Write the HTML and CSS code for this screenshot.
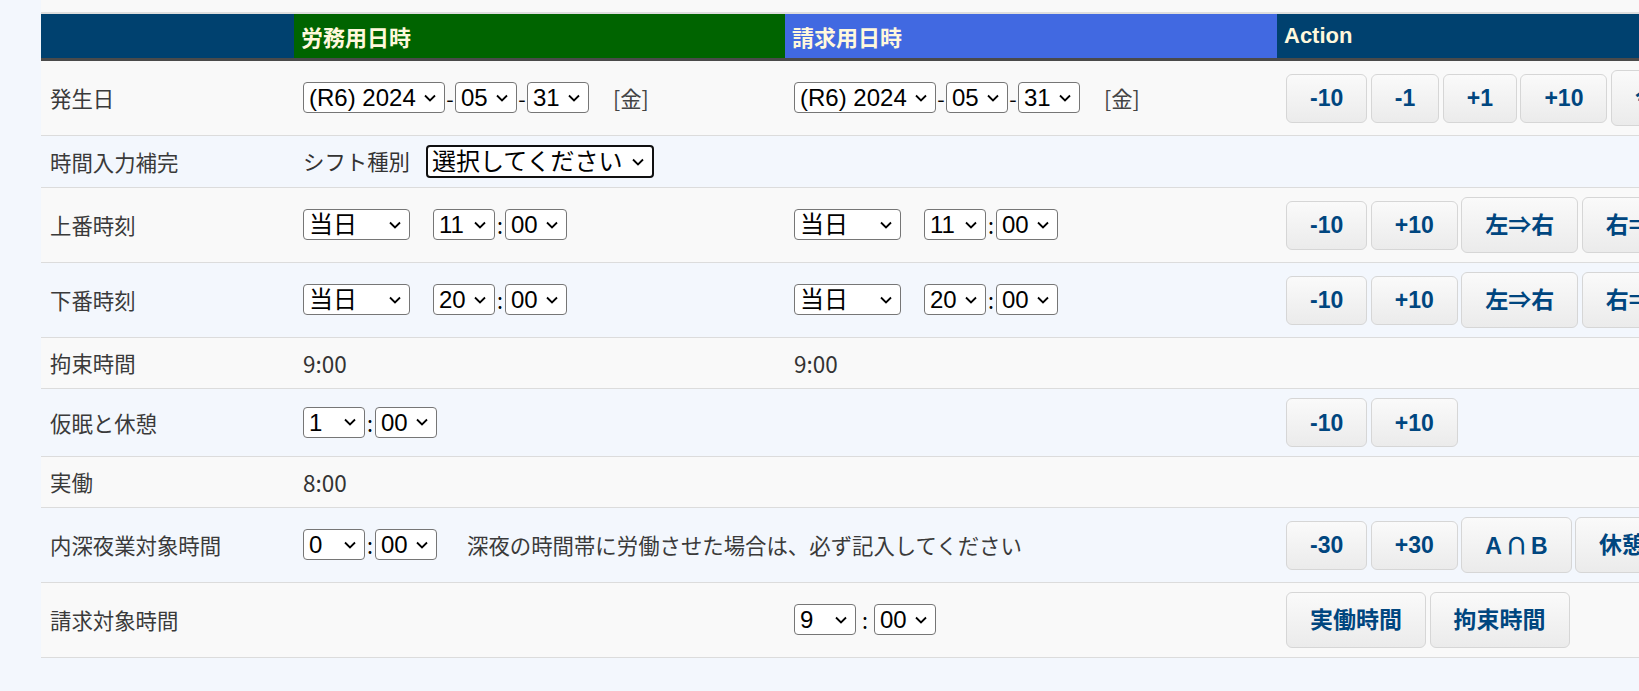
FILE: index.html
```html
<!DOCTYPE html>
<html lang="ja">
<head>
<meta charset="UTF-8">
<meta name="viewport" content="width=device-width, initial-scale=1.0">
<title>日時入力</title>
<link rel="stylesheet" href="styles.css">
</head>
<body>

<div class="page">
    <div class="topbar"></div>
    <table class="entry">
        <colgroup>
            <col class="col-label">
            <col class="col-work">
            <col class="col-bill">
            <col class="col-act">
        </colgroup>
        <thead>
            <tr>
                <th class="h-blank"></th>
                <th class="h-work">労務用日時</th>
                <th class="h-bill">請求用日時</th>
                <th class="h-act">Action</th>
            </tr>
        </thead>
        <tbody>
            <!-- 発生日 -->
            <tr>
                <td class="label">発生日</td>
                <td>
                    <select><option>(R5) 2023</option><option selected>(R6) 2024</option><option>(R7) 2025</option></select><span class="sep">-</span><select><option>04</option><option selected>05</option><option>06</option></select><span class="sep">-</span><select><option>29</option><option>30</option><option selected>31</option></select><span class="dow">[金]</span>
                </td>
                <td>
                    <select><option>(R5) 2023</option><option selected>(R6) 2024</option><option>(R7) 2025</option></select><span class="sep">-</span><select><option>04</option><option selected>05</option><option>06</option></select><span class="sep">-</span><select><option>29</option><option>30</option><option selected>31</option></select><span class="dow">[金]</span>
                </td>
                <td>
                    <div class="acts">
                        <button class="btn">-10</button>
                        <button class="btn">-1</button>
                        <button class="btn">+1</button>
                        <button class="btn">+10</button>
                        <button class="btn tall">今日</button>
                    </div>
                </td>
            </tr>
            <!-- 時間入力補完 -->
            <tr>
                <td class="label">時間入力補完</td>
                <td colspan="2">
                    シフト種別<select class="shift"><option>選択してください</option><option>日勤</option><option>夜勤</option></select>
                </td>
                <td></td>
            </tr>
            <!-- 上番時刻 -->
            <tr>
                <td class="label">上番時刻</td>
                <td>
                    <select><option>前日</option><option selected>当日</option><option>翌日</option><option>翌々日</option></select><select class="hour"><option>10</option><option selected>11</option><option>12</option></select><span class="sep">:</span><select><option selected>00</option><option>30</option></select>
                </td>
                <td>
                    <select><option>前日</option><option selected>当日</option><option>翌日</option><option>翌々日</option></select><select class="hour"><option>10</option><option selected>11</option><option>12</option></select><span class="sep">:</span><select><option selected>00</option><option>30</option></select>
                </td>
                <td>
                    <div class="acts">
                        <button class="btn">-10</button>
                        <button class="btn">+10</button>
                        <button class="btn tall">左⇒右</button>
                        <button class="btn tall">右⇒左</button>
                    </div>
                </td>
            </tr>
            <!-- 下番時刻 -->
            <tr>
                <td class="label">下番時刻</td>
                <td>
                    <select><option>前日</option><option selected>当日</option><option>翌日</option><option>翌々日</option></select><select class="hour"><option>19</option><option selected>20</option><option>21</option></select><span class="sep">:</span><select><option selected>00</option><option>30</option></select>
                </td>
                <td>
                    <select><option>前日</option><option selected>当日</option><option>翌日</option><option>翌々日</option></select><select class="hour"><option>19</option><option selected>20</option><option>21</option></select><span class="sep">:</span><select><option selected>00</option><option>30</option></select>
                </td>
                <td>
                    <div class="acts">
                        <button class="btn">-10</button>
                        <button class="btn">+10</button>
                        <button class="btn tall">左⇒右</button>
                        <button class="btn tall">右⇒左</button>
                    </div>
                </td>
            </tr>
            <!-- 拘束時間 -->
            <tr>
                <td class="label">拘束時間</td>
                <td class="val">9:00</td>
                <td class="val">9:00</td>
                <td></td>
            </tr>
            <!-- 仮眠と休憩 -->
            <tr>
                <td class="label">仮眠と休憩</td>
                <td colspan="2">
                    <select><option>0</option><option selected>1</option><option>10</option></select><span class="sep">:</span><select><option selected>00</option><option>30</option></select>
                </td>
                <td>
                    <div class="acts">
                        <button class="btn">-10</button>
                        <button class="btn">+10</button>
                    </div>
                </td>
            </tr>
            <!-- 実働 -->
            <tr>
                <td class="label">実働</td>
                <td class="val" colspan="2">8:00</td>
                <td></td>
            </tr>
            <!-- 内深夜業対象時間 -->
            <tr>
                <td class="label">内深夜業対象時間</td>
                <td colspan="2">
                    <select><option selected>0</option><option>1</option><option>10</option></select><span class="sep">:</span><select><option selected>00</option><option>30</option></select><span class="note">深夜の時間帯に労働させた場合は、必ず記入してください</span>
                </td>
                <td>
                    <div class="acts">
                        <button class="btn">-30</button>
                        <button class="btn">+30</button>
                        <button class="btn tall">A<span class="cjk">∩</span>B</button>
                        <button class="btn tall">休憩控除</button>
                    </div>
                </td>
            </tr>
            <!-- 請求対象時間 -->
            <tr>
                <td class="label">請求対象時間</td>
                <td></td>
                <td>
                    <select><option>8</option><option selected>9</option><option>10</option></select><span class="sep wide">:</span><select><option selected>00</option><option>30</option></select>
                </td>
                <td>
                    <div class="acts">
                        <button class="btn tall">実働時間</button>
                        <button class="btn tall">拘束時間</button>
                    </div>
                </td>
            </tr>
        </tbody>
    </table>
</div>

</body>
</html>
```

FILE: styles.css
```css
body {
    margin: 0;
    background-color: #f3f7fd;
    font-family: "Noto Sans CJK JP", "Liberation Sans", sans-serif;
    font-size: 21.4px;
    color: #333;
}

.page {
    margin-left: 41px;
    overflow: hidden;
}

.topbar {
    height: 12px;
    background-color: #f9f9f9;
    border-bottom: 2px solid #dedede;
}

.entry {
    width: 1856px;
    table-layout: fixed;
    border-collapse: separate;
    border-spacing: 0;
}

.col-label { width: 253px; }
.col-work { width: 491px; }
.col-bill { width: 492px; }
.col-act { width: 620px; }

/* 見出し */
.entry th {
    box-sizing: border-box;
    height: 47px;
    padding: 0 7px;
    text-align: left;
    font-family: "Liberation Sans", "Noto Sans CJK JP", sans-serif;
    font-size: 22px;
    font-weight: bold;
    color: #fff8dc;
    border-bottom: 3px solid #4a4a4a;
}

.h-blank, .h-act {
    background-color: #00416f;
}

.h-work {
    background-color: #006400;
}

.h-bill {
    background-color: #4169e1;
}

.entry td {
    padding: 9px;
    line-height: 32px;
    vertical-align: middle;
    white-space: nowrap;
    border-bottom: 1px solid #dcdcdc;
}

.entry tbody tr:nth-child(odd) td {
    background-color: #f9f9f9;
}

.label {
    color: #3a3a3a;
}

.val {
    font-size: 22.5px;
}

/* プルダウン */
select {
    appearance: none;
    -webkit-appearance: none;
    box-sizing: border-box;
    height: 31px;
    padding: 0 28px 0 5px;
    border: 1px solid #767676;
    border-radius: 4px;
    background: #fff url("data:image/svg+xml,%3Csvg xmlns='http://www.w3.org/2000/svg' width='12' height='8' viewBox='0 0 12 8'%3E%3Cpath d='M1 1.5l5 5 5-5' fill='none' stroke='%23000' stroke-width='1.8'/%3E%3C/svg%3E") no-repeat right 8px center;
    font-family: "Liberation Sans", "Noto Sans CJK JP", sans-serif;
    font-size: 24px;
    line-height: normal;
    color: #000;
    vertical-align: top;
}

select.hour {
    margin-left: 23px;
}

select.shift {
    height: 33px;
    margin-left: 16px;
    border: 2px solid #101010;
    padding-left: 4px;
}

.sep {
    display: inline-block;
    width: 10px;
    text-align: center;
    color: #000;
}

.sep.wide {
    width: 18px;
}

.dow {
    margin-left: 24px;
    color: #444;
}

.note {
    margin-left: 30px;
    color: #3a3a3a;
}

/* ボタン */
.acts {
    display: flex;
    align-items: center;
    gap: 3.5px;
}

.btn {
    flex: none;
    box-sizing: border-box;
    height: 49px;
    padding: 0 23px;
    border: 1px solid #d6d6d6;
    border-radius: 6px;
    background: linear-gradient(#fafafa, #ebebeb);
    color: #00467f;
    font-family: "Liberation Sans", "Noto Sans CJK JP", sans-serif;
    font-size: 23px;
    font-weight: bold;
    line-height: 26px;
}

.btn.tall {
    height: 56px;
}

.btn .cjk {
    font-family: "Noto Sans CJK JP", sans-serif;
    margin: 0 3px;
}
```
